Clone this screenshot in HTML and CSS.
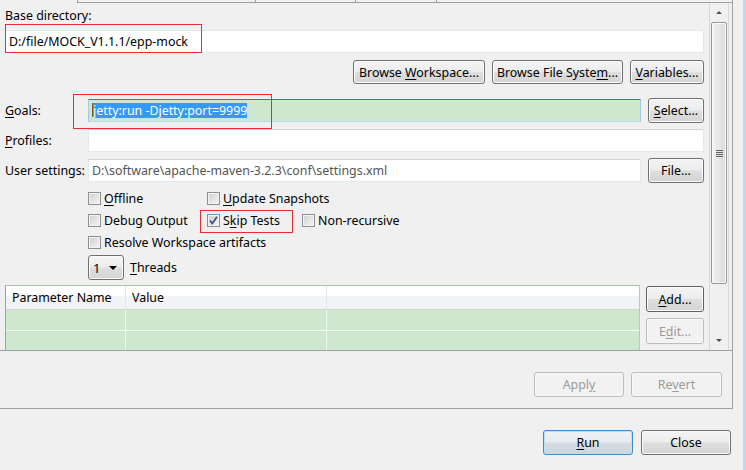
FILE: index.html
```html
<!DOCTYPE html>
<html>
<head>
<meta charset="utf-8">
<title>Run Configuration</title>
<link rel="stylesheet" href="styles.css">
</head>
<body>
<div class="window">
  <div class="main">
    <div class="panel">
      <div class="tabstrip">
        <div class="tab tab-active"></div>
        <div class="tab tab-2"></div>
        <div class="tab tab-3"></div>
        <div class="tab tab-4"></div>
        <div class="tab tab-5"></div>
      </div>
      <div class="scroll">
        <div class="content">
          <div class="label-top">Base directory:</div>
          <div class="field field-full">D:/file/MOCK_V1.1.1/epp-mock</div>
          <div class="btn-row">
            <div class="btn w-bw"><span>Browse <u>W</u>orkspace...</span></div>
            <div class="btn w-bfs"><span>Browse File Syste<u>m</u>...</span></div>
            <div class="btn w-var"><span><u>V</u>ariables...</span></div>
          </div>
          <div class="row row-goals">
            <div class="row-label"><u>G</u>oals:</div>
            <div class="field field-mid field-focus"><span class="sel">jetty:run -Djetty:port=9999</span></div>
            <div class="btn w-side"><span><u>S</u>elect...</span></div>
          </div>
          <div class="row row-profiles">
            <div class="row-label"><u>P</u>rofiles:</div>
            <div class="field field-wide"></div>
          </div>
          <div class="row row-settings">
            <div class="row-label">User settings:</div>
            <div class="field field-mid field-gray">D:\software\apache-maven-3.2.3\conf\settings.xml</div>
            <div class="btn w-side"><span>File...</span></div>
          </div>
          <div class="checks">
            <div class="cb"><span class="box"></span><span><u>O</u>ffline</span></div>
            <div class="cb cb-span2"><span class="box"></span><span><u>U</u>pdate Snapshots</span></div>
            <div class="cb"><span class="box"></span><span>Debu<u>g</u> Output</span></div>
            <div class="cb"><span class="box"><svg viewBox="0 0 11 11" width="11" height="11"><path d="M2 5.6 L4.3 8.6 L9 1.8" fill="none" stroke="#3b4f8c" stroke-width="1.7"/></svg></span><span>S<u>k</u>ip Tests</span></div>
            <div class="cb"><span class="box"></span><span>Non-recursive</span></div>
            <div class="cb cb-span3"><span class="box"></span><span>Resolve Workspace artifacts</span></div>
          </div>
          <div class="threads">
            <div class="combo"><span>1</span><span class="combo-arrow"></span></div>
            <span><u>T</u>hreads</span>
          </div>
          <div class="table-block">
            <div class="table">
              <div class="thead">
                <div class="th c1">Parameter Name</div>
                <div class="th c2">Value</div>
                <div class="th c3"></div>
              </div>
              <div class="tr">
                <div class="td c1"></div><div class="td c2"></div><div class="td c3"></div>
              </div>
              <div class="tr">
                <div class="td c1"></div><div class="td c2"></div><div class="td c3"></div>
              </div>
              <div class="tr">
                <div class="td c1"></div><div class="td c2"></div><div class="td c3"></div>
              </div>
            </div>
            <div class="side-btns">
              <div class="btn btn-add"><span><u>A</u>dd...</span></div>
              <div class="btn btn-edit btn-disabled"><span>E<u>d</u>it...</span></div>
            </div>
          </div>
        </div>
        <div class="vscroll">
          <div class="arrow-up"></div>
          <div class="thumb"><div class="grip"></div></div>
          <div class="arrow-down"></div>
        </div>
      </div>
      <div class="apply-row">
        <div class="btn btn-disabled w-apply"><span>Appl<u>y</u></span></div>
        <div class="btn btn-disabled w-revert"><span>Re<u>v</u>ert</span></div>
      </div>
    </div>
    <div class="footer">
      <div class="btn btn-default w-run"><span><u>R</u>un</span></div>
      <div class="btn w-close"><span>Close</span></div>
    </div>
  </div>
  <div class="frame-edge"></div>
</div>
<div class="mark mark-base"></div>
<div class="mark mark-goals"></div>
<div class="mark mark-skip"></div>
</body>
</html>
```
FILE: styles.css
```css
* { box-sizing: border-box; }
html, body { margin: 0; padding: 0; }
body {
  width: 746px;
  height: 470px;
  overflow: hidden;
  position: relative;
  background: #f0f0f0;
  font-family: "Noto Sans", "Open Sans", sans-serif;
  font-size: 12.4px;
  color: #000;
}
u { text-decoration: underline; text-underline-offset: 2px; }

.window { display: flex; height: 470px; }
.main { width: 743px; display: flex; flex-direction: column; }
.frame-edge { width: 3px; background: #c2d6ee; }

.panel {
  width: 733px;
  height: 409px;
  flex: none;
  border-right: 1px solid #a0a0a0;
  border-bottom: 1px solid #a0a0a0;
  display: flex;
  flex-direction: column;
}

/* tab strip remnant */
.tabstrip { display: flex; height: 3px; flex: none; }
.tab { height: 3px; border-bottom: 1px solid #a0a0a0; border-left: 1px solid #a0a0a0; }
.tab-active { width: 77px; border-left: none; border-bottom-color: transparent; }
.tab-2 { width: 178px; }
.tab-3 { width: 100px; }
.tab-4 { width: 81px; }
.tab-5 { flex: 1; }

.scroll {
  height: 348px;
  flex: none;
  border-bottom: 1px solid #a0a0a0;
  display: flex;
  overflow: hidden;
}
.content {
  width: 709px;
  flex: none;
  padding: 5px 5px 0 5px;
  display: flex;
  flex-direction: column;
}
.content > * { flex: none; }

.label-top { height: 16px; line-height: 16px; }

.field {
  height: 23px;
  line-height: 21px;
  padding: 0 3px;
  background: #fff;
  border: 1px solid #e3e9ef;
  border-top-color: #cfd2d6;
  white-space: nowrap;
  overflow: hidden;
  flex: none;
}
.field-full { margin-top: 6px; width: 699px; border-top-color: #e3e9ef; }
.field-mid { width: 553px; }
.field-wide { width: 616px; }
.field-gray { color: #555; }
.field-focus {
  background: #cde8cf;
  border-color: #3d7bad #a4c9e3 #b7d9ed #a4c9e3;
}
.sel {
  display: inline-block;
  line-height: 15px;
  background: #3399ff;
  color: #fff;
  border-left: 1px solid #8a5a1a;
  vertical-align: middle;
  margin-top: -2px;
}

.btn {
  height: 24px;
  display: flex;
  align-items: center;
  justify-content: center;
  border: 1px solid #707070;
  border-radius: 3px;
  background: linear-gradient(#f4f4f4 0%, #ececec 48%, #dedede 52%, #d4d4d4 100%);
  box-shadow: inset 0 0 0 1px #fbfbfb;
  white-space: nowrap;
  flex: none;
}
.btn-disabled {
  color: #9a9a9a;
  border-color: #bcbcbc;
  background: #f2f2f2;
  box-shadow: inset 0 0 0 1px #f8f8f8;
}
.btn-default {
  border-color: #3c8ad0;
  background: linear-gradient(#f1f4f6 0%, #e7ebee 48%, #d6dde2 52%, #cfd6db 100%);
  box-shadow: inset 0 0 0 1px #b9e2fb;
}

.btn-row {
  margin-top: 7px;
  display: flex;
  justify-content: flex-end;
  gap: 7px;
}
.w-bw { width: 132px; }
.w-bfs { width: 131px; }
.w-var { width: 74px; }

.row { display: flex; align-items: center; }
.row-label { width: 83px; flex: none; white-space: nowrap; }
.row .btn { margin-left: 7px; }
.row-goals { margin-top: 14px; height: 25px; }
.row-profiles { margin-top: 6px; height: 23px; }
.row-settings { margin-top: 6px; height: 25px; }
.w-side { width: 56px; height: 25px; }

.checks {
  margin-top: 4px;
  padding-left: 83px;
  display: grid;
  grid-template-columns: 119px 95px auto;
  grid-auto-rows: 22px;
}
.cb { display: flex; align-items: center; gap: 3px; white-space: nowrap; }
.cb-span2 { grid-column: span 2; }
.cb-span3 { grid-column: 1 / span 3; }
.box {
  width: 13px;
  height: 13px;
  flex: none;
  border: 1px solid #8e8f8f;
  background: linear-gradient(135deg, #cfcfcf, #f6f6f6);
  box-shadow: inset 0 0 0 1px #f3f3f3;
  display: flex;
  align-items: center;
  justify-content: center;
}
.box svg { display: block; }

.threads {
  margin-top: 2px;
  padding-left: 83px;
  display: flex;
  align-items: center;
  gap: 6px;
  height: 25px;
}
.combo {
  width: 36px;
  height: 25px;
  border: 1px solid #707070;
  border-radius: 3px;
  background: linear-gradient(#f4f4f4 0%, #ececec 48%, #dedede 52%, #d4d4d4 100%);
  box-shadow: inset 0 0 0 1px #fbfbfb;
  display: flex;
  align-items: center;
  justify-content: space-between;
  padding: 0 6px 0 4px;
  font-size: 13px;
}
.combo-arrow {
  width: 0; height: 0;
  border-left: 4px solid transparent;
  border-right: 4px solid transparent;
  border-top: 4px solid #000;
}

.table-block {
  margin-top: 5px;
  display: flex;
  gap: 6px;
}
.table {
  width: 635px;
  height: 90px;
  border: 1px solid #a0a0a0;
  border-top-color: #a9c0a9;
  border-right-color: #b5cbb5;
  background: #cde8cf;
}
.thead {
  display: flex;
  height: 24px;
  background: linear-gradient(#ffffff 0%, #ffffff 40%, #f3f4f6 45%, #f1f2f4 100%);
  border-bottom: 1px solid #d5d5d5;
}
.th { height: 23px; line-height: 23px; padding-left: 6px; border-right: 1px solid #e3e5e8; }
.c1 { width: 120px; }
.c2 { width: 201px; }
.c3 { flex: 1; border-right: none; }
.tr { display: flex; height: 21px; background: #cde8cf; border-bottom: 1px solid #f4faf4; }
.td { height: 20px; border-right: 1px solid #eef7ee; }
.td.c3 { border-right: none; }

.side-btns { display: flex; flex-direction: column; gap: 6px; width: 58px; padding-top: 1px; }
.btn-add { height: 26px; border-color: #5f5f5f; }
.btn-edit { height: 26px; }

/* scrollbar */
.vscroll {
  width: 20px;
  flex: none;
  background: #f0f0f0;
  border-left: 1px solid #d8d8d8;
  border-right: 1px solid #d8d8d8;
  display: flex;
  flex-direction: column;
  align-items: center;
}
.arrow-up {
  margin-top: 8px;
  width: 0; height: 0;
  border-left: 3px solid transparent;
  border-right: 3px solid transparent;
  border-bottom: 3px solid #505050;
}
.thumb {
  margin-top: 8px;
  width: 16px;
  height: 262px;
  border: 1px solid #979797;
  border-radius: 2px;
  background: linear-gradient(90deg, #f3f3f3, #e6e6e6 50%, #dadada);
  box-shadow: inset 0 0 0 1px #fcfcfc;
  display: flex;
  align-items: center;
  justify-content: center;
}
.grip {
  width: 7px;
  height: 7px;
  background: repeating-linear-gradient(#606060 0 1px, transparent 1px 2px);
}
.arrow-down {
  margin-top: 55px;
  width: 0; height: 0;
  border-left: 3px solid transparent;
  border-right: 3px solid transparent;
  border-top: 3px solid #505050;
}

.apply-row {
  flex: 1;
  display: flex;
  justify-content: flex-end;
  align-items: flex-start;
  gap: 7px;
  padding: 21px 10px 0 0;
}
.w-apply { width: 90px; height: 25px; }
.w-revert { width: 91px; height: 25px; }

.footer {
  display: flex;
  justify-content: flex-end;
  gap: 8px;
  padding: 21px 12px 0 0;
}
.w-run { width: 90px; height: 25px; }
.w-close { width: 90px; height: 25px; }

/* red annotation boxes */
.mark { position: absolute; border: 1px solid #ee2a2a; }
.mark-base { left: 5px; top: 24px; width: 197px; height: 29px; }
.mark-goals { left: 73px; top: 94px; width: 199px; height: 35px; }
.mark-skip { left: 200px; top: 210px; width: 93px; height: 23px; }
```
